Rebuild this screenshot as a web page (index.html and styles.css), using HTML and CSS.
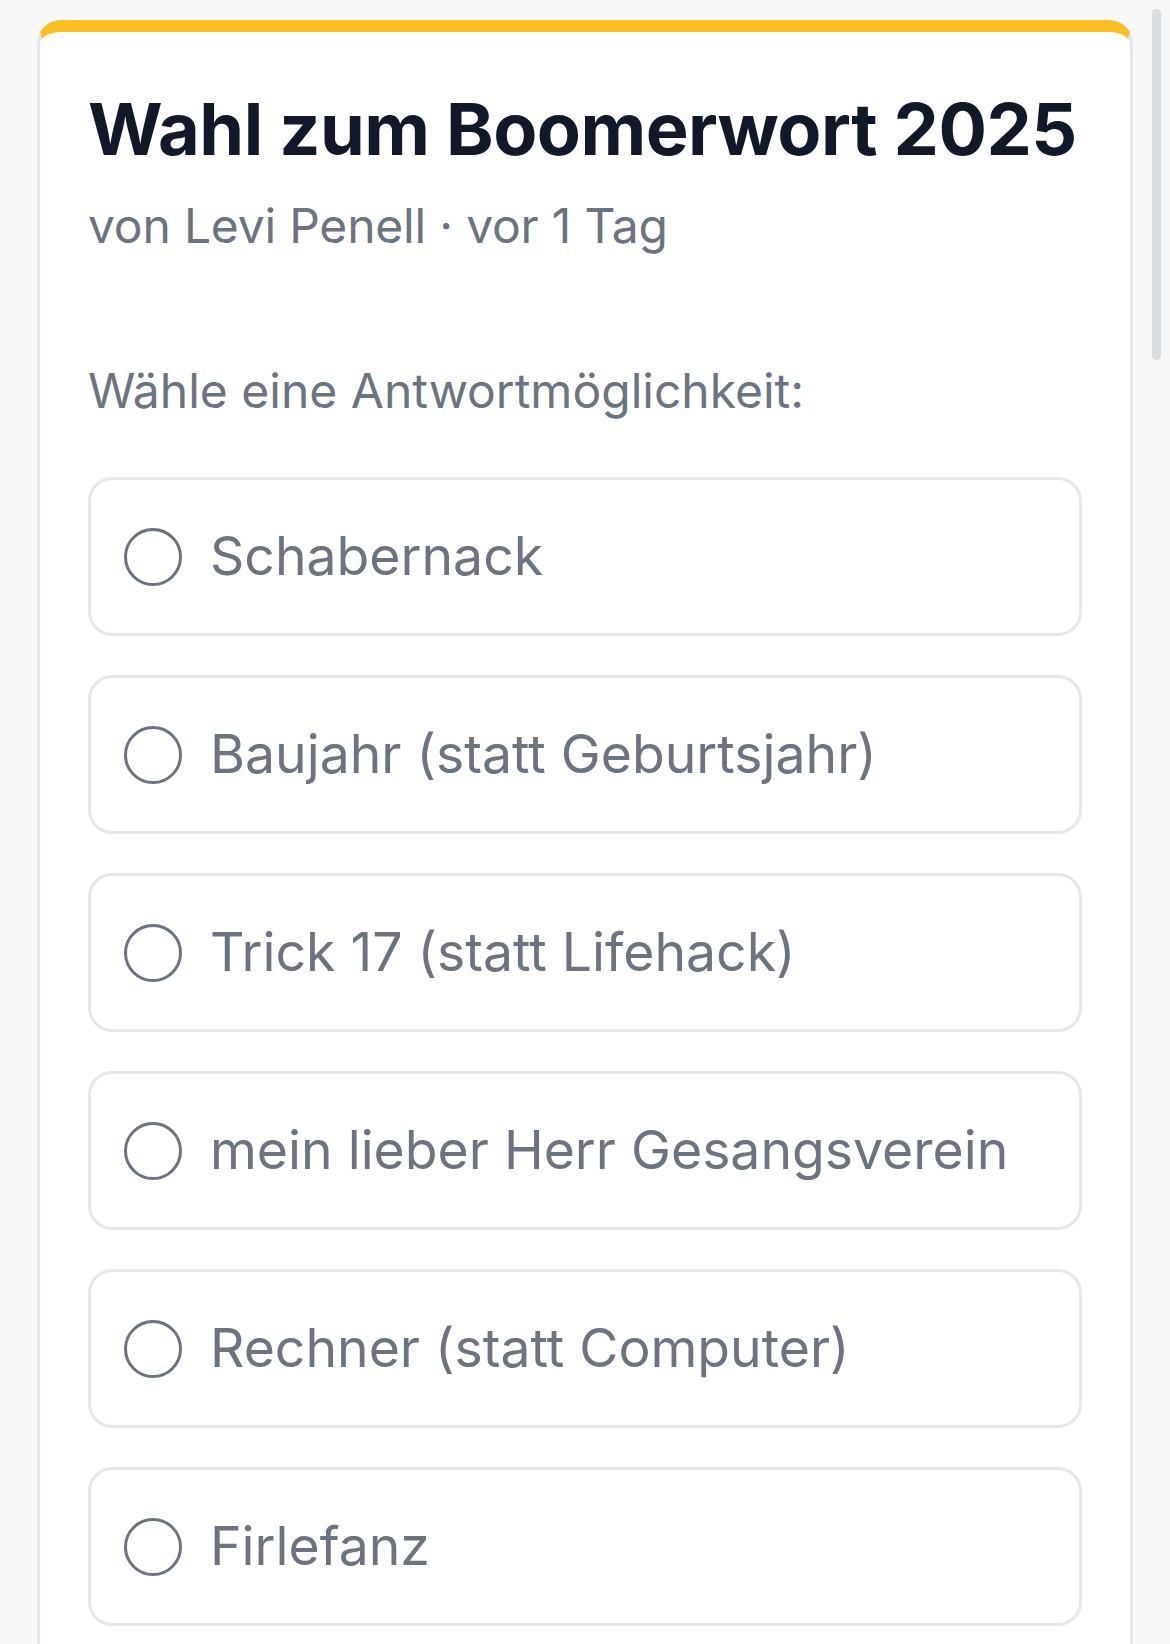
FILE: index.html
```html
<!DOCTYPE html>
<html lang="de">
<head>
<meta charset="utf-8">
<title>Wahl zum Boomerwort 2025</title>
<link rel="stylesheet" href="styles.css">
</head>
<body>
<main class="page">
  <section class="card">
    <h1 class="title">Wahl zum Boomerwort 2025</h1>
    <p class="meta">von Levi Penell · vor 1 Tag</p>
    <p class="prompt">Wähle eine Antwortmöglichkeit:</p>
    <ul class="options">
      <li class="option"><span class="radio"></span><span class="label">Schabernack</span></li>
      <li class="option"><span class="radio"></span><span class="label">Baujahr (statt Geburtsjahr)</span></li>
      <li class="option"><span class="radio"></span><span class="label">Trick 17 (statt Lifehack)</span></li>
      <li class="option"><span class="radio"></span><span class="label">mein lieber Herr Gesangsverein</span></li>
      <li class="option"><span class="radio"></span><span class="label">Rechner (statt Computer)</span></li>
      <li class="option"><span class="radio"></span><span class="label">Firlefanz</span></li>
    </ul>
  </section>
</main>
<div class="scrollbar"></div>
</body>
</html>
```

FILE: styles.css
```css
* { box-sizing: border-box; }
html, body { margin: 0; padding: 0; }
body {
  background: #f6f8fa;
  font-family: Inter, "Noto Sans", "Liberation Sans", sans-serif;
  overflow: hidden;
  height: 1644px;
}
.page {
  padding: 20px 37px 0 37px;
}
.card {
  background: #ffffff;
  border: 3px solid #e5e7eb;
  border-top: 12px solid #fbbf24;
  border-radius: 24px 24px 0 0;
  padding: 52px 48px 120px 48px;
}
.title {
  margin: 0;
  font-size: 72px;
  font-weight: 700;
  line-height: 90px;
  color: #111827;
  letter-spacing: -0.5px;
  white-space: nowrap;
}
.meta {
  margin: 16px 0 0 0;
  font-size: 48px;
  line-height: 72px;
  color: #6b7280;
  letter-spacing: -0.2px;
}
.prompt {
  margin: 93px 0 0 0;
  font-size: 48px;
  line-height: 72px;
  color: #6b7280;
}
.options {
  list-style: none;
  margin: 50px 0 0 0;
  padding: 0;
  display: flex;
  flex-direction: column;
  gap: 39px;
}
.option {
  height: 159px;
  border: 3px solid #e5e7eb;
  border-radius: 24px;
  display: flex;
  align-items: center;
  padding: 0 33px;
  gap: 28px;
}
.radio {
  flex: none;
  width: 58px;
  height: 58px;
  border: 3px solid #6b7280;
  border-radius: 50%;
}
.label {
  font-size: 53.5px;
  color: #6b7280;
  line-height: 1.2;
  white-space: nowrap;
}
.scrollbar {
  position: absolute;
  top: 9px;
  left: 1152px;
  width: 9px;
  height: 351px;
  border-radius: 5px;
  background: #dadee1;
}
```
